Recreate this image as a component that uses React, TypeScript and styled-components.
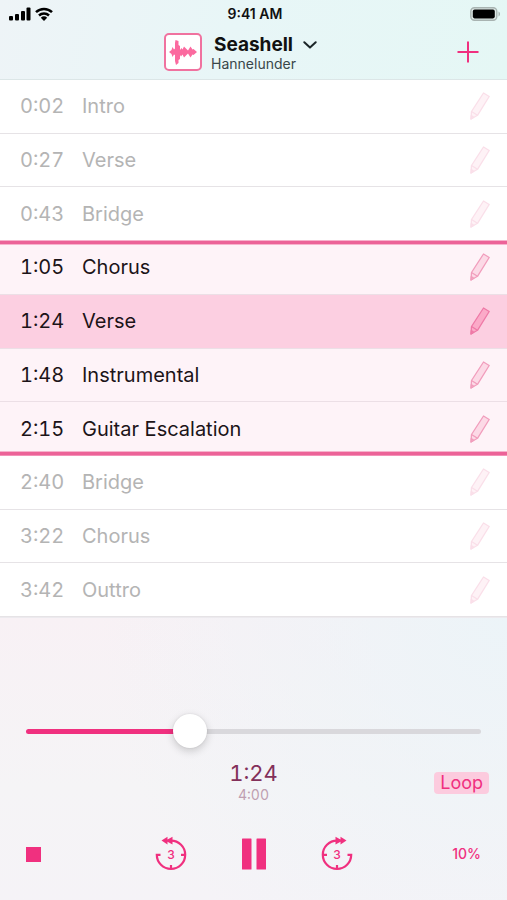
import React, { useState } from "react";
import styled, { createGlobalStyle, css } from "styled-components";

const pink = "#f0307f";

const GlobalStyle = createGlobalStyle`
  *, *::before, *::after { box-sizing: border-box; }
  body {
    margin: 0;
    font-family: Inter, "Liberation Sans", sans-serif;
    color: #111;
    background: #f5f3f6;
  }
  button {
    border: 0;
    padding: 0;
    background: none;
    font: inherit;
    color: inherit;
    cursor: pointer;
  }
  svg { display: block; }
`;

const Page = styled.div`
  min-height: 100vh;
  display: flex;
  flex-direction: column;
`;

const Header = styled.header`
  background: linear-gradient(100deg, #eef4f7 0%, #e8f6f7 45%, #e5f7f5 100%);
  border-bottom: 1px solid #dce6e7;
`;

const StatusBar = styled.div`
  display: grid;
  grid-template-columns: 1fr auto 1fr;
  align-items: center;
  height: 28px;
  padding: 0 6px 0 9px;
  font-size: 14px;
  line-height: 16px;
  font-weight: 600;
`;

const Signals = styled.div`
  display: flex;
  align-items: center;
  gap: 4px;
`;

const BatteryBox = styled.div`
  justify-self: end;
`;

const TitleBar = styled.div`
  display: grid;
  grid-template-columns: 1fr auto 1fr;
  align-items: center;
  height: 51px;
  padding-bottom: 3px;
`;

const Artwork = styled.div`
  justify-self: end;
  margin-right: 9px;
`;

const Titles = styled.div`
  padding-top: 3px;
  text-align: center;
`;

const Title = styled.h1`
  margin: 0;
  font-size: 19px;
  line-height: 21px;
  font-weight: 700;
`;

const Subtitle = styled.p`
  margin: 0;
  font-size: 14px;
  line-height: 18px;
  color: #39464a;
`;

const TitleActions = styled.div`
  display: flex;
  justify-content: space-between;
  align-items: center;
  padding: 0 28px 0 7px;
`;

const ChevronButton = styled.button`
  && {
    padding-bottom: 14px;
  }
`;

const Markers = styled.ol`
  flex: 1;
  display: flex;
  flex-direction: column;
  margin: 0;
  padding: 0;
  list-style: none;
  background: #fff;
`;

const Marker = styled.li<{ $state: "out" | "in" | "now"; $edge?: "start" | "end" }>`
  flex: 1 0 48px;
  display: flex;
  align-items: center;
  padding: 0 17px 0 20px;
  border-bottom: 1px solid #e6e3e6;
  font-size: 20px;
  line-height: 24px;
  color: #b4b4b4;

  ${({ $state }) =>
    $state !== "out" &&
    css`
      color: #1c1418;
      border-color: #ecdfe6;
      background: ${$state === "now" ? "#fccfe1" : "#fef3f8"};
    `}
  ${({ $edge }) =>
    $edge === "start" &&
    css`
      box-shadow: inset 0 3px #ec6398, inset 0 4px #f7b3cd, 0 -1px #f7b3cd;
      position: relative;
    `}
  ${({ $edge }) =>
    $edge === "end" &&
    css`
      border-bottom-color: #f391b7;
      box-shadow: inset 0 -3px #ec6398, inset 0 -4px #f7b3cd;
    `}
`;

const Time = styled.time`
  width: 62px;
  padding-right: 19px;
  text-align: right;
  white-space: nowrap;
  font-variant-numeric: tabular-nums;
`;

const MarkerName = styled.span`
  flex: 1;
`;

const EditButton = styled.button<{ $state: "out" | "in" | "now" }>`
  opacity: ${({ $state }) => ($state === "out" ? 0.32 : 1)};
  color: ${({ $state }) => ($state === "now" ? "#ee79a6" : "#f19dbc")};
  --body: ${({ $state }) => ($state === "now" ? "#fbaac8" : "#fcd9e6")};
`;

const Player = styled.footer`
  padding: 96px 26px 26px;
  border-top: 1px solid #eceaee;
  background:
    radial-gradient(circle at 100% 0, #ecf4f8 0, rgba(240, 244, 247, 0) 70%),
    linear-gradient(180deg, #f8f1f5 0, #f5f4f6 60%, #f5f3f7 100%);
`;

const Slider = styled.input`
  appearance: none;
  display: block;
  width: 100%;
  height: 34px;
  margin: 0;
  background: none;
  cursor: pointer;

  &::-webkit-slider-runnable-track {
    height: 5px;
    border-radius: 3px;
    background: linear-gradient(
      90deg,
      ${pink} var(--progress),
      #d9d8dc var(--progress)
    );
  }
  &::-webkit-slider-thumb {
    appearance: none;
    width: 34px;
    height: 34px;
    margin-top: -15px;
    border-radius: 50%;
    background: #fff;
    box-shadow: 0 3px 9px rgba(0, 0, 0, 0.18), 0 0 2px rgba(0, 0, 0, 0.1);
  }
`;

const Readout = styled.div`
  display: grid;
  grid-template-columns: 1fr auto 1fr;
  margin: 12px -8px 0;
`;

const Clock = styled.div`
  grid-column: 2;
  text-align: center;
  font-variant-numeric: tabular-nums;
`;

const Elapsed = styled.div`
  font-size: 22px;
  line-height: 26px;
  color: #83305a;
`;

const Total = styled.div`
  font-size: 14px;
  line-height: 18px;
  color: #bf9fb0;
`;

const LoopButton = styled.button`
  && {
    justify-self: end;
    align-self: center;
    margin-top: 1px;
    padding: 0 6px;
    border-radius: 4px;
    background: #fccbde;
    color: ${pink};
    font-size: 18px;
    line-height: 22px;
  }
`;

const Transport = styled.div`
  display: grid;
  grid-template-columns: 1fr auto 1fr;
  align-items: center;
  margin-top: 30px;
  height: 40px;
  color: ${pink};
`;

const TransportCenter = styled.div`
  display: flex;
  align-items: center;
  gap: 53px;
`;

const StopButton = styled.button`
  justify-self: start;
`;

const RateButton = styled.button`
  && {
    justify-self: end;
    font-size: 14px;
    line-height: 18px;
    font-weight: 500;
  }
`;

const SkipLabel = styled.text`
  font-size: 12px;
  font-weight: 500;
  text-anchor: middle;
  fill: currentColor;
`;

const SignalIcon = () => (
  <svg width="22" height="14" viewBox="0 0 22 14" aria-hidden="true">
    <rect x="0" y="9" width="4" height="4.5" rx="1" />
    <rect x="6" y="7" width="4" height="6.5" rx="1" />
    <rect x="12" y="4" width="4" height="9.5" rx="1" />
    <rect x="17.5" y="0.5" width="4" height="13" rx="1" />
  </svg>
);

const WifiIcon = () => (
  <svg width="18" height="14" viewBox="0 0 18 14" fill="none" stroke="#000" strokeWidth="2.5" aria-hidden="true">
    <path d="M1 5.2a11.5 11.5 0 0 1 16 0" />
    <path d="M4 8.5a7.3 7.3 0 0 1 10 0" />
    <path d="M9 14L5.8 10.7a4.7 4.7 0 0 1 6.4 0z" fill="#000" stroke="none" />
  </svg>
);

const BatteryIcon = () => (
  <svg width="31" height="14" viewBox="0 0 31 14" aria-hidden="true">
    <rect x="0.8" y="0.8" width="26" height="12.4" rx="3.6" fill="#dfe9e7" stroke="#a8b3b1" strokeWidth="1.4" />
    <rect x="2.8" y="2.6" width="22" height="8.8" rx="1.8" />
    <path d="M28.5 4.5c2 .7 2 4.3 0 5z" fill="#a8b3b1" />
  </svg>
);

const ArtworkIcon = () => (
  <svg width="38" height="38" viewBox="0 0 38 38" role="img" aria-label="Waveform">
    <rect x="1" y="1" width="36" height="36" rx="4" fill="#fff" stroke="#f0729f" strokeWidth="2" />
    <path
      d="M5 19L7.500 17L8.500 14L10 16.500L11 15.500V10L11.500 7L14.500 8V12L16 13V17L17.500 15L18.500 16.500L20 13.500L22.500 16L24 17.500L26.500 13.500L28.500 16.500L29.500 16L33 19L29.500 22L28.500 21.500L26.500 24.500L24 20.500L22.500 22L20 24.500L18.500 21.500L17 23.500L16 22V26L14.500 27V30L12 32L11 28V22L10 21.500L8.500 24L7.500 21Z"
      fill="#fb6a9f"
    />
  </svg>
);

const ChevronIcon = () => (
  <svg width="14" height="22" viewBox="0 0 14 22" fill="none" stroke="#1b2527" strokeWidth="2" aria-hidden="true">
    <path d="M1.3 8.300l5.700 5.300L12.700 8.300" strokeLinecap="round" strokeLinejoin="round" />
  </svg>
);

const PlusIcon = () => (
  <svg width="22" height="22" viewBox="0 0 22 22" stroke={pink} strokeWidth="2" aria-hidden="true">
    <path d="M11 0.5v21M0.5 11h21" />
  </svg>
);

const PencilIcon = () => (
  <svg width="20" height="28" viewBox="0 0 20 28" stroke="currentColor" strokeWidth="1.3" strokeLinejoin="round" aria-hidden="true">
    <path d="M1 27l.5-7.500L13.500 1l5.700 3.500L7.500 23.300z" fill="var(--body)" />
    <path d="M1.500 19.500l6 3.800M1 27l.3-3.500 2.400 1.700z" fill="none" />
  </svg>
);

const SkipIcon = ({ forward = false }: { forward?: boolean }) => (
  <svg width="34" height="36" viewBox="0 0 34 36" aria-hidden="true">
    <g transform={forward ? "translate(34 0) scale(-1 1)" : undefined}>
      <path
        d="M14.5 4.6H17A14.2 14.2 0 1 1 2.800 18.8H6.500M31 18.8h-4M17 33v-4"
        fill="none"
        stroke="currentColor"
        strokeWidth="2.2"
      />
      <path d="M7.500 4.600L13.500 .8v2.600L18.500 .8v7.600L13.500 5.800v2.600z" fill="currentColor" />
    </g>
    <SkipLabel x="17" y="23">3</SkipLabel>
  </svg>
);

const PauseIcon = () => (
  <svg width="26" height="32" viewBox="0 0 26 32" fill="currentColor" aria-hidden="true">
    <rect x="1" y="0.5" width="9.5" height="31" rx="0.5" />
    <rect x="15.5" y="0.5" width="9.5" height="31" rx="0.5" />
  </svg>
);

const StopIcon = () => (
  <svg width="15" height="15" viewBox="0 0 15 15" fill="currentColor" aria-hidden="true">
    <rect width="15" height="15" />
  </svg>
);

const markers: { at: number; name: string }[] = [
  { at: 2, name: "Intro" },
  { at: 27, name: "Verse" },
  { at: 43, name: "Bridge" },
  { at: 65, name: "Chorus" },
  { at: 84, name: "Verse" },
  { at: 108, name: "Instrumental" },
  { at: 135, name: "Guitar Escalation" },
  { at: 160, name: "Bridge" },
  { at: 202, name: "Chorus" },
  { at: 222, name: "Outtro" },
];

const duration = 240;
const loop = { first: 3, last: 6 };

const formatTime = (s: number) => `${Math.floor(s / 60)}:${String(s % 60).padStart(2, "0")}`;

export default function App() {
  const [position, setPosition] = useState(84);
  const current = markers.reduce((found, m, i) => (m.at <= position ? i : found), -1);

  return (
    <>
      <GlobalStyle />
      <Page>
        <Header>
          <StatusBar>
            <Signals>
              <SignalIcon />
              <WifiIcon />
            </Signals>
            <span>9:41 AM</span>
            <BatteryBox>
              <BatteryIcon />
            </BatteryBox>
          </StatusBar>
          <TitleBar>
            <Artwork>
              <ArtworkIcon />
            </Artwork>
            <Titles>
              <Title>Seashell</Title>
              <Subtitle>Hannelunder</Subtitle>
            </Titles>
            <TitleActions>
              <ChevronButton aria-label="Choose song">
                <ChevronIcon />
              </ChevronButton>
              <button aria-label="Add marker">
                <PlusIcon />
              </button>
            </TitleActions>
          </TitleBar>
        </Header>

        <Markers>
          {markers.map((m, i) => {
            const inside = i >= loop.first && i <= loop.last;
            const state = i === current ? "now" : inside ? "in" : "out";
            const edge = i === loop.first ? "start" : i === loop.last ? "end" : undefined;
            return (
              <Marker key={m.at} $state={state} $edge={edge}>
                <Time>{formatTime(m.at)}</Time>
                <MarkerName>{m.name}</MarkerName>
                <EditButton $state={state} aria-label={`Edit ${m.name}`}>
                  <PencilIcon />
                </EditButton>
              </Marker>
            );
          })}
        </Markers>

        <Player>
          <Slider
            type="range"
            aria-label="Position"
            min={0}
            max={duration}
            value={position}
            onChange={(e) => setPosition(Number(e.target.value))}
            style={{ "--progress": `${(position / duration) * 100}%` } as React.CSSProperties}
          />
          <Readout>
            <Clock>
              <Elapsed>{formatTime(position)}</Elapsed>
              <Total>{formatTime(duration)}</Total>
            </Clock>
            <LoopButton aria-pressed="true">Loop</LoopButton>
          </Readout>
          <Transport>
            <StopButton aria-label="Stop">
              <StopIcon />
            </StopButton>
            <TransportCenter>
              <button aria-label="Back 3 seconds">
                <SkipIcon />
              </button>
              <button aria-label="Pause">
                <PauseIcon />
              </button>
              <button aria-label="Forward 3 seconds">
                <SkipIcon forward />
              </button>
            </TransportCenter>
            <RateButton aria-label="Speed 10%">10%</RateButton>
          </Transport>
        </Player>
      </Page>
    </>
  );
}
